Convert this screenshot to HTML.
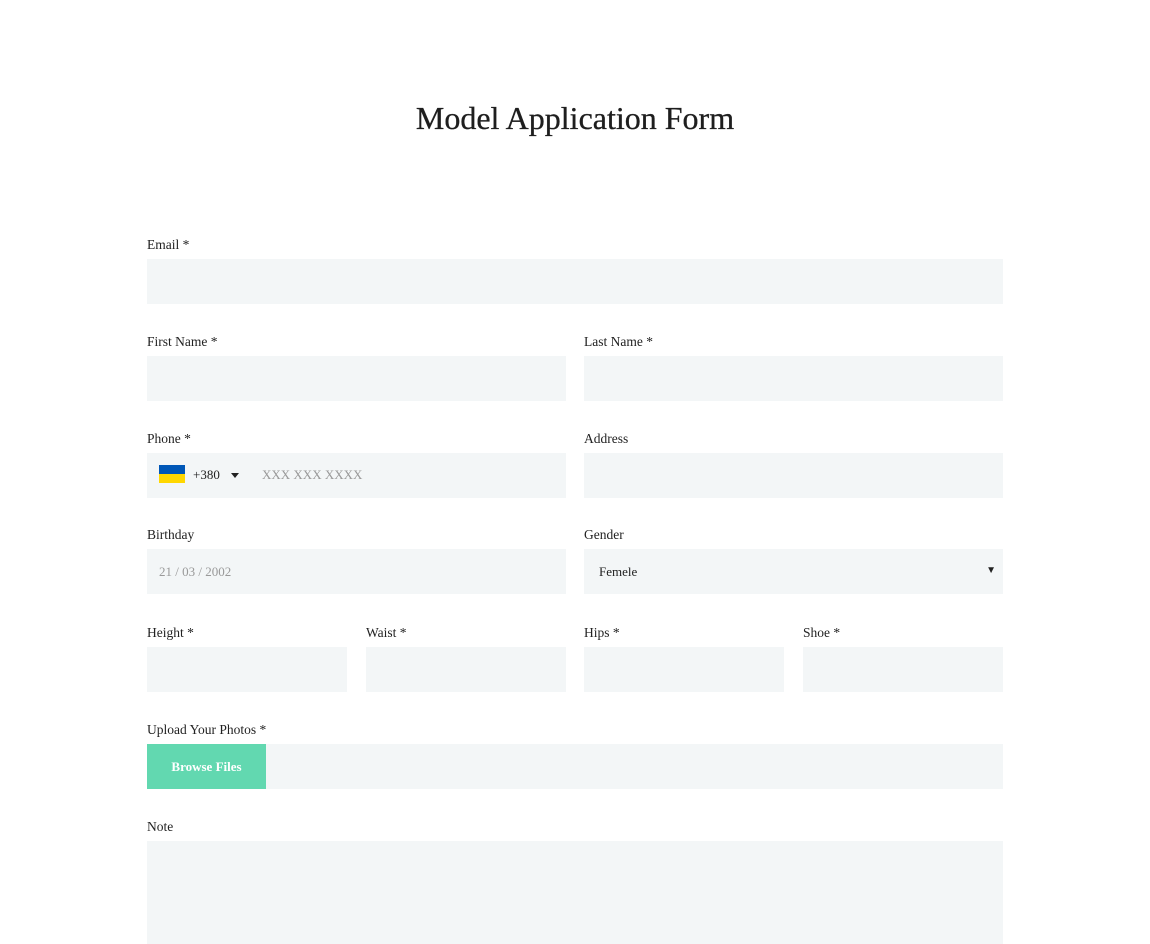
<!DOCTYPE html>
<html><head><meta charset="utf-8"><style>
body{margin:0;background:#fff;width:1150px;height:944px;overflow:hidden;position:relative;font-family:"Liberation Serif",serif;color:#222}
h1{position:absolute;top:98px;left:0;width:1150px;text-align:center;margin:0;font-size:32px;font-weight:normal;line-height:40px;color:#1e1e1e;-webkit-text-stroke:0.3px #1e1e1e}
.l{position:absolute;font-size:13.5px;line-height:16px;color:#222;margin-top:1px}
.f{position:absolute;background:#f3f6f7;height:45px}
.t{position:absolute;font-size:13px;color:#999;top:15px}
</style></head><body>
<h1>Model Application Form</h1>
<div class="l" style="left:147px;top:236px">Email *</div>
<div class="f" style="left:147px;top:259px;width:856px"></div>

<div class="l" style="left:147px;top:333px">First Name *</div>
<div class="f" style="left:147px;top:356px;width:419px"></div>
<div class="l" style="left:584px;top:333px">Last Name *</div>
<div class="f" style="left:584px;top:356px;width:419px"></div>

<div class="l" style="left:147px;top:430px">Phone *</div>
<div class="f" style="left:147px;top:453px;width:419px">
<div style="position:absolute;left:12px;top:12px;width:26px;height:9px;background:#0057b7"></div>
<div style="position:absolute;left:12px;top:21px;width:26px;height:9px;background:#ffd700"></div>
<div style="position:absolute;left:46px;top:14px;font-size:13px;color:#222">+380</div>
<div style="position:absolute;left:84px;top:20px;border:4px solid transparent;border-top:5px solid #222;border-bottom:0"></div>
<div class="t" style="left:115px;top:14px">XXX XXX XXXX</div>
</div>
<div class="l" style="left:584px;top:430px">Address</div>
<div class="f" style="left:584px;top:453px;width:419px"></div>

<div class="l" style="left:147px;top:526px">Birthday</div>
<div class="f" style="left:147px;top:549px;width:419px"><div class="t" style="left:12px">21 / 03 / 2002</div></div>
<div class="l" style="left:584px;top:526px">Gender</div>
<div class="f" style="left:584px;top:549px;width:419px"><div class="t" style="left:15px;color:#222">Femele</div><div style="position:absolute;right:7px;top:16px;font-size:10px">▼</div></div>

<div class="l" style="left:147px;top:624px">Height *</div>
<div class="f" style="left:147px;top:647px;width:200px"></div>
<div class="l" style="left:366px;top:624px">Waist *</div>
<div class="f" style="left:366px;top:647px;width:200px"></div>
<div class="l" style="left:584px;top:624px">Hips *</div>
<div class="f" style="left:584px;top:647px;width:200px"></div>
<div class="l" style="left:803px;top:624px">Shoe *</div>
<div class="f" style="left:803px;top:647px;width:200px"></div>

<div class="l" style="left:147px;top:721px">Upload Your Photos *</div>
<div class="f" style="left:147px;top:744px;width:856px"><div style="position:absolute;left:0;top:0;width:119px;height:45px;background:#62d8b0;color:#fff;font-weight:bold;font-size:13px;line-height:45px;text-align:center">Browse Files</div></div>

<div class="l" style="left:147px;top:818px">Note</div>
<div class="f" style="left:147px;top:841px;width:856px;height:103px"></div>
</body></html>
